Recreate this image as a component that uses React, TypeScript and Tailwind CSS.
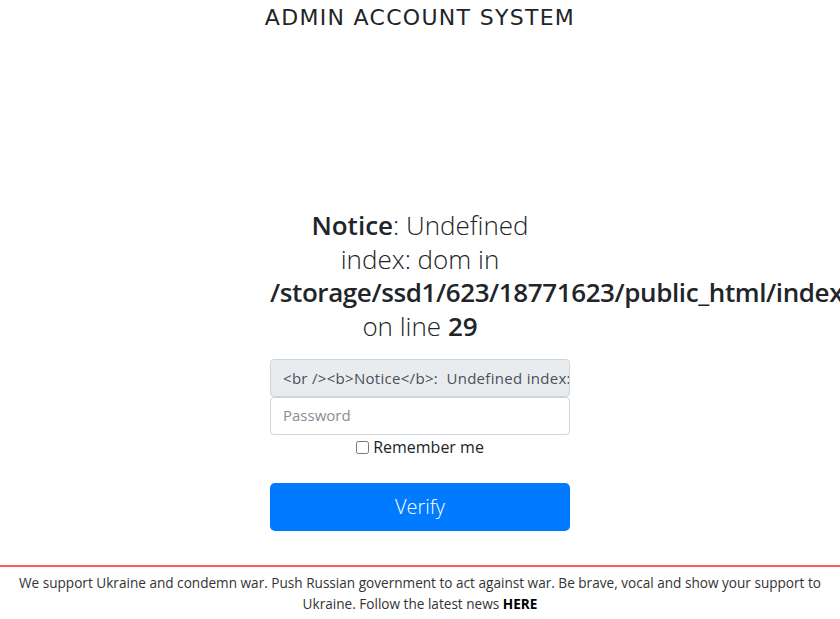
export default function App() {
  return (
    <div className="min-h-[619px] bg-white text-[#212529] flex flex-col" style={{ fontFamily: '"Open Sans", "Noto Sans", sans-serif' }}>
      <h1 className="text-center text-[22px] leading-[28px] mt-[4px] tracking-[1.3px]" style={{ fontFamily: '"DejaVu Sans", sans-serif', fontWeight: 400 }}>
        ADMIN ACCOUNT SYSTEM
      </h1>
      <div className="w-[300px] mx-auto mt-[177px]">
        <div className="text-center text-[26px] leading-[33.5px] font-light whitespace-normal">
          <b className="font-semibold">Notice</b>: Undefined<br />index: dom in <b className="font-semibold tracking-[-0.4px]">/storage/ssd1/623/18771623/public_html/index.php</b> on line <b className="font-semibold">29</b>
        </div>
        <div className="mt-[16px]">
          <div className="h-[38px] w-full rounded-[4px] border border-[#ced4da] bg-[#e9ecef] px-[12px] flex items-center text-[15px] tracking-[0.3px] text-[#495057] overflow-hidden whitespace-nowrap">
            &lt;br /&gt;&lt;b&gt;Notice&lt;/b&gt;:&nbsp; Undefined index: dom in
          </div>
          <div className="h-[38px] w-full rounded-[4px] border border-[#ced4da] bg-white px-[12px] flex items-center text-[15px] text-[#868e96] pb-[2px]">
            Password
          </div>
          <div className="flex items-center justify-center mt-[1px] h-[22px] text-[16px] text-[#212529]">
            <input type="checkbox" className="w-[13px] h-[13px] mr-[4px]" />
            <span>Remember me</span>
          </div>
          <button className="mt-[25px] w-full h-[48px] rounded-[5px] bg-[#007bff] text-white text-[20px] font-light">
            Verify
          </button>
        </div>
      </div>
      <div className="mt-[34px] border-t-2 border-[#ff5a5f] pt-[5px] pb-[6px] text-center text-[13.6px] leading-[21px] text-[#333] px-[12px]">
        We support Ukraine and condemn war. Push Russian government to act against war. Be brave, vocal and show your support to Ukraine. Follow the latest news <b className="font-bold text-black">HERE</b>
      </div>
    </div>
  );
}
